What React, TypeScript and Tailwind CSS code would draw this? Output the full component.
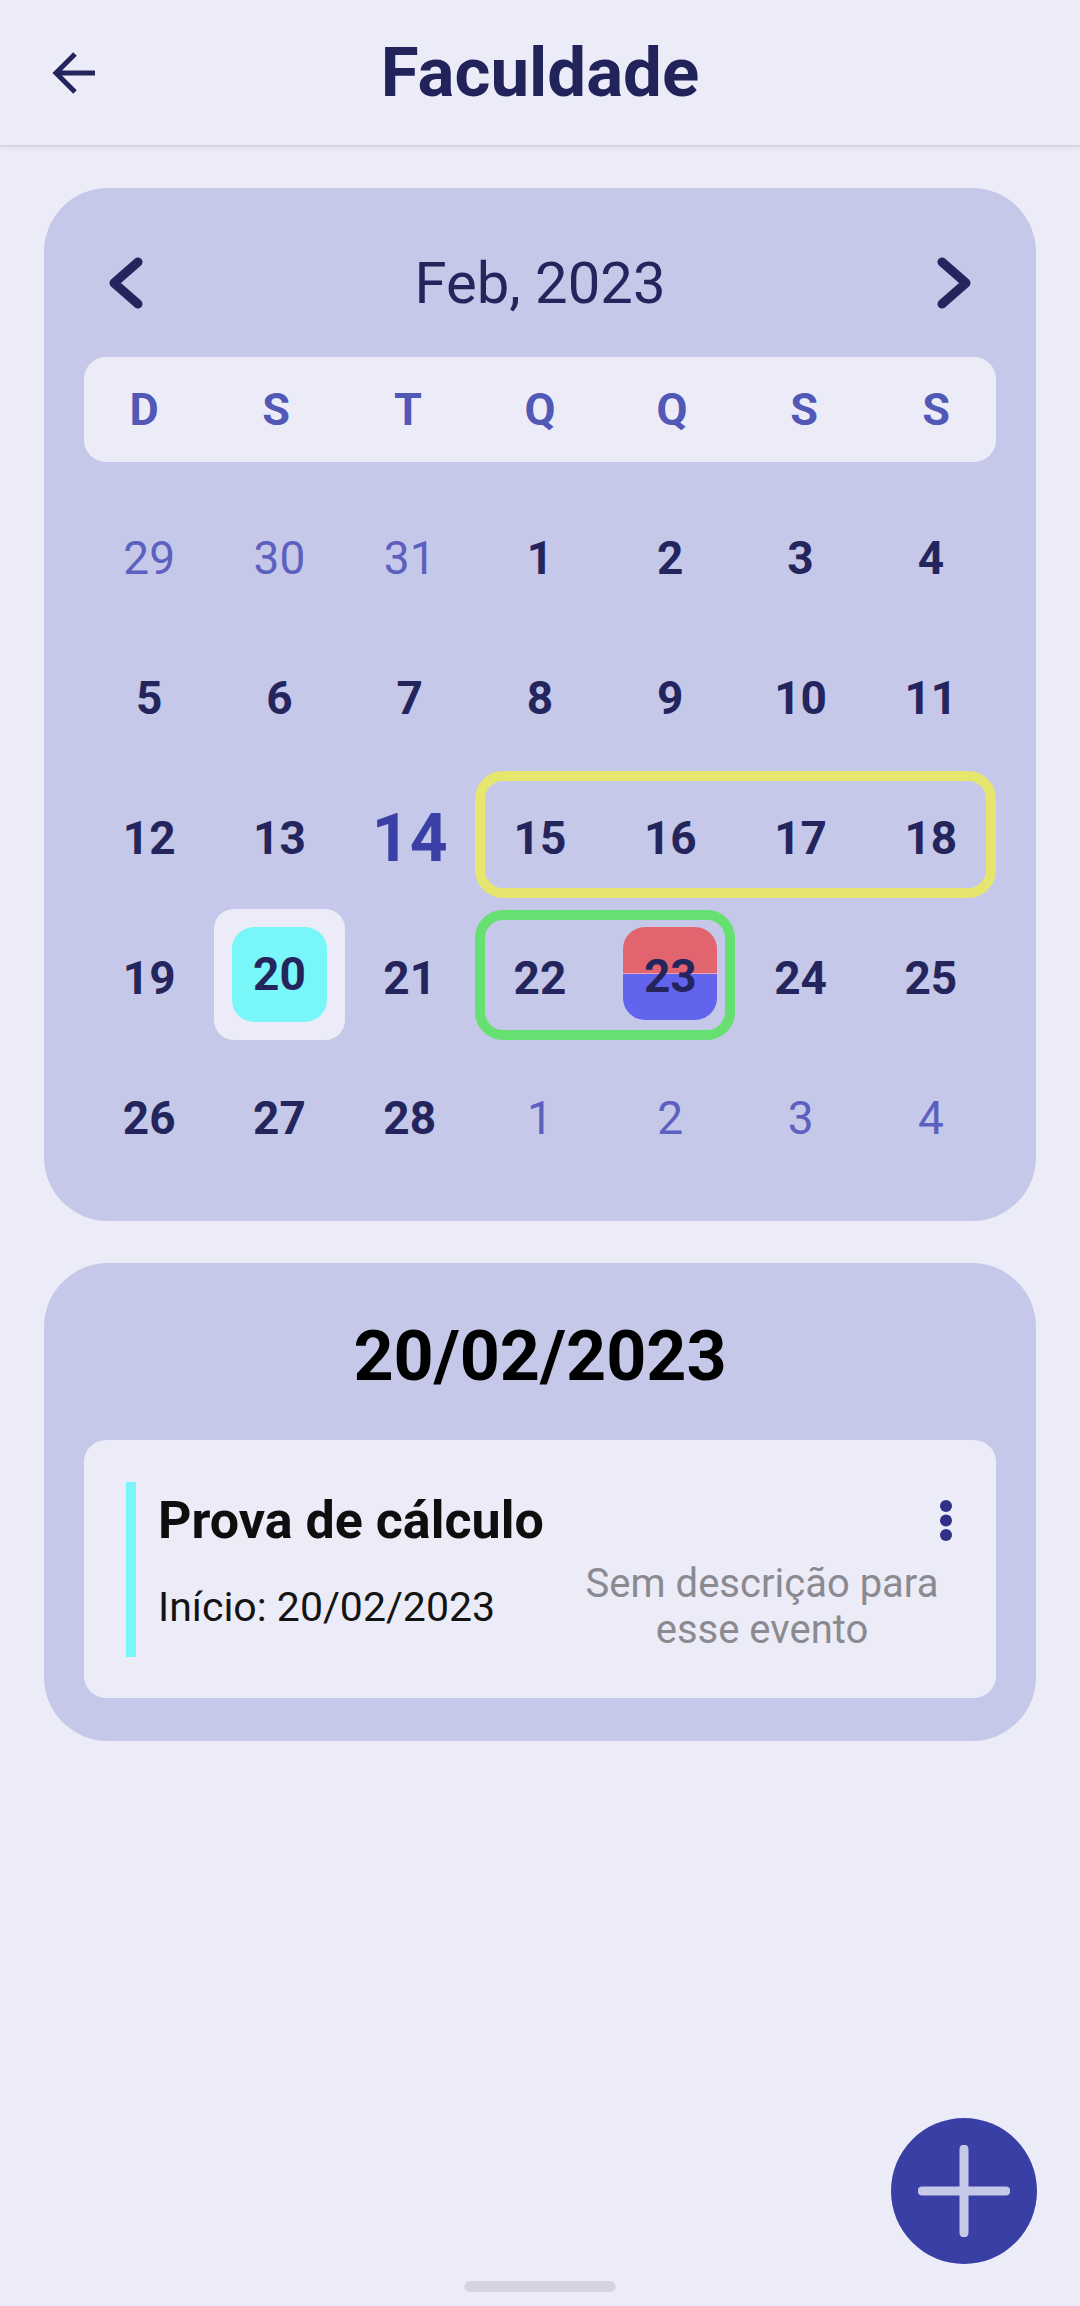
import React from 'react';

const colStart = ['col-start-1', 'col-start-2', 'col-start-3', 'col-start-4', 'col-start-5', 'col-start-6', 'col-start-7'];
const rowStart = ['row-start-1', 'row-start-2', 'row-start-3', 'row-start-4', 'row-start-5'];

type Day = { n: number; muted?: boolean; big?: boolean };

const weeks: Day[][] = [
  [{ n: 29, muted: true }, { n: 30, muted: true }, { n: 31, muted: true }, { n: 1 }, { n: 2 }, { n: 3 }, { n: 4 }],
  [{ n: 5 }, { n: 6 }, { n: 7 }, { n: 8 }, { n: 9 }, { n: 10 }, { n: 11 }],
  [{ n: 12 }, { n: 13 }, { n: 14, big: true }, { n: 15 }, { n: 16 }, { n: 17 }, { n: 18 }],
  [{ n: 19 }, { n: 20 }, { n: 21 }, { n: 22 }, { n: 23 }, { n: 24 }, { n: 25 }],
  [{ n: 26 }, { n: 27 }, { n: 28 }, { n: 1, muted: true }, { n: 2, muted: true }, { n: 3, muted: true }, { n: 4, muted: true }],
];

const weekdays = ['D', 'S', 'T', 'Q', 'Q', 'S', 'S'];

const Chevron = ({ dir }: { dir: 'left' | 'right' }) => (
  <svg width="44" height="56" viewBox="0 0 44 56" fill="none">
    <path
      d={dir === 'left' ? 'M34 7 L10 28 L34 49' : 'M10 7 L34 28 L10 49'}
      stroke="#24255C"
      strokeWidth="9"
      strokeLinecap="round"
      strokeLinejoin="round"
    />
  </svg>
);

const Calendar = () => {
  return (
    <div className="bg-[#C5C8E8] rounded-[64px] px-[40px] pt-[52px] pb-[33px]">
      {/* mês */}
      <div className="flex items-center justify-between h-[86px] px-[20px]">
        <Chevron dir="left" />
        <span className="text-[58px] text-[#24255C] leading-none">Feb, 2023</span>
        <Chevron dir="right" />
      </div>

      {/* dias da semana */}
      <div className="mt-[31px] h-[105px] bg-[#ECECF8] rounded-[22px] grid grid-cols-[repeat(7,132px)] justify-center items-center">
        {weekdays.map((d, i) => (
          <span key={i} className="text-center text-[45px] font-bold text-[#5258B6]">
            {d}
          </span>
        ))}
      </div>

      {/* grade */}
      <div className="mt-[26px] grid grid-cols-7 grid-rows-[repeat(5,140px)]">
        {/* semana marcada */}
        <div className="col-start-4 col-span-4 row-start-3 mt-[3px] mb-[10px] border-[10px] border-[#E6E56E] rounded-[28px]" />
        {/* evento 22-23 */}
        <div className="col-start-4 col-span-2 row-start-4 mt-[2px] mb-[8px] border-[10px] border-[#66E070] rounded-[28px]" />

        {weeks.map((week, r) =>
          week.map((day, c) => {
            const pos = `${colStart[c]} ${rowStart[r]}`;
            if (r === 3 && c === 1) {
              return (
                <div key={`${r}-${c}`} className={`${pos} mt-[1px] mb-[8px] bg-[#ECECF8] rounded-[20px] p-[18px] flex`}>
                  <div className="flex-1 bg-[#79F6FA] rounded-[22px] flex items-center justify-center text-[46px] font-bold text-[#24255C]">
                    20
                  </div>
                </div>
              );
            }
            if (r === 3 && c === 4) {
              return (
                <div key={`${r}-${c}`} className={`${pos} pt-[19px] pb-[28px] px-[18px] flex`}>
                  <div className="flex-1 rounded-[22px] bg-[linear-gradient(to_bottom,#E2646F_49%,#E9A6B8_49%,#E9A6B8_51%,#6364EE_51%)] flex items-center justify-center text-[46px] font-bold text-[#24255C] pt-[6px]">
                    23
                  </div>
                </div>
              );
            }
            return (
              <div key={`${r}-${c}`} className={`${pos} flex items-center justify-center`}>
                <span
                  className={
                    day.big
                      ? 'text-[66px] font-bold text-[#3A40A6]'
                      : day.muted
                      ? 'text-[46px] text-[#5C61BF]'
                      : 'text-[46px] font-bold text-[#24255C]'
                  }
                >
                  {day.n}
                </span>
              </div>
            );
          })
        )}
      </div>
    </div>
  );
};

const EventCard = () => (
  <div className="bg-[#C5C8E8] rounded-[64px] px-[40px] pt-[52px] pb-[43px]">
    <h2 className="text-center text-[70px] leading-[82px] font-bold text-black">20/02/2023</h2>

    <div className="mt-[43px] bg-[#ECECF8] rounded-[22px] pl-[42px] pr-[44px] pt-[42px] pb-[41px] flex gap-[22px]">
      <div className="w-[10px] bg-[#79F6FA] self-stretch" />
      <div className="flex-1 pt-[8px] pb-[4px]">
        <div className="flex items-center justify-between">
          <span className="text-[52px] leading-[61px] font-bold text-[#0E0E0E]">Prova de cálculo</span>
          <svg width="12" height="42" viewBox="0 0 12 42">
            <circle cx="6" cy="6" r="6" fill="#2F3086" />
            <circle cx="6" cy="20.5" r="6" fill="#2F3086" />
            <circle cx="6" cy="35" r="6" fill="#2F3086" />
          </svg>
        </div>
        <div className="mt-[10px] flex items-center justify-between">
          <span className="text-[41px] leading-[48px] text-[#141414]">Início: 20/02/2023</span>
          <p className="w-[380px] text-center text-[40px] leading-[46px] text-[#8A8A90]">
            Sem descrição para esse evento
          </p>
        </div>
      </div>
    </div>
  </div>
);

export default function App() {
  return (
    <div className="relative min-h-[2306px] bg-[#ECECF8] font-['Roboto',sans-serif] overflow-hidden">
      {/* topo */}
      <header className="h-[147px] grid grid-cols-[1fr_auto_1fr] items-center border-b-2 border-[#D8D8E3] shadow-[0_2px_4px_rgba(0,0,0,0.05)]">
        <div className="pl-[52px]">
          <svg width="44" height="44" viewBox="0 0 44 44" fill="none">
            <path d="M43 22 H4 M23 3 L4 22 L23 41" stroke="#24255C" strokeWidth="5" />
          </svg>
        </div>
        <h1 className="text-[69px] font-bold text-[#23235B] leading-none">Faculdade</h1>
        <div />
      </header>

      <main className="px-[44px] pt-[41px] flex flex-col gap-[42px]">
        <Calendar />
        <EventCard />
      </main>

      {/* botão adicionar */}
      <button className="absolute right-[43px] bottom-[42px] w-[146px] h-[146px] rounded-full bg-[#3A3FA6] flex items-center justify-center">
        <svg width="92" height="92" viewBox="0 0 92 92" fill="none">
          <path d="M46 4 V88 M4 46 H88" stroke="#C5C8E8" strokeWidth="9" strokeLinecap="round" />
        </svg>
      </button>

      {/* barra de navegação */}
      <div className="absolute bottom-[14px] left-1/2 -translate-x-1/2 w-[151px] h-[11px] rounded-full bg-[#D5D5E2]" />
    </div>
  );
}
